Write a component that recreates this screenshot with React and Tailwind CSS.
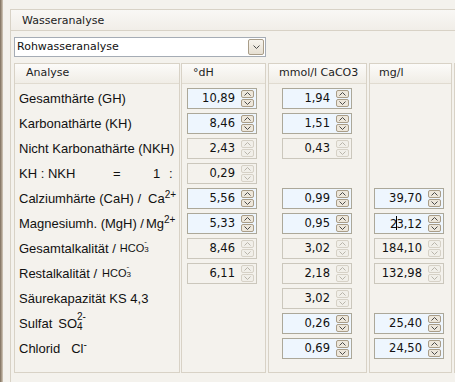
import React from 'react';

// stacked super/subscript so the charge sits above the index
const Stack = ({ top, bottom, size, shift }) => (
  <span className={`inline-flex flex-col leading-[0.95] relative ${size} ${shift}`}>
    <span>{top}</span>
    <span>{bottom}</span>
  </span>
);

const rows = [
  { label: <>Gesamthärte (GH)</>, dh: ['10,89', true], mmol: ['1,94', true], mg: null },
  { label: <>Karbonathärte (KH)</>, dh: ['8,46', true], mmol: ['1,51', true], mg: null },
  { label: <>Nicht Karbonathärte (NKH)</>, dh: ['2,43', false], mmol: ['0,43', false], mg: null },
  {
    label: (
      <>
        <span>KH : NKH</span>
        <span className="absolute left-[94px]">=</span>
        <span className="absolute left-[134px]">1</span>
        <span className="absolute left-[150px]">:</span>
      </>
    ),
    dh: ['0,29', false],
    mmol: null,
    mg: null,
  },
  {
    label: (
      <>
        <span>Calziumhärte (CaH) /</span>
        <span className="absolute left-[129px]">
          Ca<sup className="text-[10px]">2+</sup>
        </span>
      </>
    ),
    dh: ['5,56', true],
    mmol: ['0,99', true],
    mg: ['39,70', true],
  },
  {
    label: (
      <>
        <span>Magnesiumh. (MgH) /</span>
        <span className="absolute left-[127px]">
          Mg<sup className="text-[10px]">2+</sup>
        </span>
      </>
    ),
    dh: ['5,33', true],
    mmol: ['0,95', true],
    mg: ['23,12', true, 1],
  },
  {
    label: (
      <>
        <span>Gesamtalkalität /</span>
        <span className="ml-[4px] text-[11px]">HCO</span>
        <Stack top="-" bottom="3" size="text-[8px]" shift="-top-[3px]" />
      </>
    ),
    dh: ['8,46', false],
    mmol: ['3,02', false],
    mg: ['184,10', false],
  },
  {
    label: (
      <>
        <span>Restalkalität /</span>
        <span className="ml-[5px] text-[11px]">HCO</span>
        <Stack top="-" bottom="3" size="text-[8px]" shift="-top-[3px]" />
      </>
    ),
    dh: ['6,11', false],
    mmol: ['2,18', false],
    mg: ['132,98', false],
  },
  { label: <>Säurekapazität KS 4,3</>, dh: null, mmol: ['3,02', false], mg: null },
  {
    label: (
      <>
        <span>Sulfat</span>
        <span className="ml-[6px]">SO</span>
        <Stack top="2-" bottom="4" size="text-[10px]" shift="-top-[2px]" />
      </>
    ),
    dh: null,
    mmol: ['0,26', true],
    mg: ['25,40', true],
  },
  {
    label: (
      <>
        <span>Chlorid</span>
        <span className="ml-[11px]">
          Cl<sup className="text-[10px]">-</sup>
        </span>
      </>
    ),
    dh: null,
    mmol: ['0,69', true],
    mg: ['24,50', true],
  },
];

const Arrow = ({ up, on }) => (
  <svg width="7" height="4" viewBox="0 0 7 4" className="block">
    <path
      d={up ? 'M0.5 3.5 L3.5 0.5 L6.5 3.5' : 'M0.5 0.5 L3.5 3.5 L6.5 0.5'}
      fill="none"
      stroke={on ? '#4a4a4a' : '#b8b4aa'}
      strokeWidth="1"
    />
  </svg>
);

const Spin = ({ value }) => {
  if (!value) return <div className="h-[21px]" />;
  const [text, on, caret] = value;
  return (
    <div
      className={`h-[21px] w-[70px] flex items-center border ${
        on ? 'bg-[#eef6fe] border-[#aca899]' : 'bg-[#f4f2ed] border-[#cbc7bc]'
      }`}
    >
      <div className="flex-1 text-right pr-[6px] text-[11.5px] text-[#111] font-['DejaVu_Sans',sans-serif] leading-none">
        {caret ? (
          <>
            2<span className="inline-block w-px h-[14px] bg-black align-middle -mx-[1px] relative -top-[1px]" />
            3,12
          </>
        ) : (
          text
        )}
      </div>
      <div className="flex flex-col gap-px mr-[2px]">
        {[true, false].map((up) => (
          <div
            key={up ? 'u' : 'd'}
            className={`w-[13px] h-[8px] flex items-center justify-center border rounded-[2px] ${
              on ? 'bg-[#ede7db] border-[#a99d88]' : 'bg-[#f1efe9] border-[#d6d1c6]'
            }`}
          >
            <Arrow up={up} on={on} />
          </div>
        ))}
      </div>
    </div>
  );
};

const Column = ({ title, width, pad, titlePad, children }) => (
  <div className={`${width} h-[310px] border border-[#d8d2c6] bg-[#f4f2ed] flex flex-col shrink-0`}>
    <div
      className={`h-[20px] border-b border-[#e0dbd0] bg-gradient-to-b from-[#fcfbf9] to-[#f0ede6] flex items-center ${titlePad} text-[11px] text-[#222] font-['DejaVu_Sans',sans-serif]`}
    >
      {title}
    </div>
    <div className={`flex flex-col gap-[4px] pt-[4px] ${pad}`}>{children}</div>
  </div>
);

export default function App() {
  return (
    <div className="w-[455px] h-[382px] bg-[#f4f2ed] flex overflow-hidden font-['Liberation_Sans',Arial,sans-serif]">
      <div className="w-[3px] shrink-0 bg-gradient-to-r from-[#7c6d5c] via-[#a89a88] to-[#d5ccbf]" />
      <div className="flex-1 pl-[7px] pt-[9px] min-w-0">
        <div className="border-l border-t border-[#d8d2c6] h-full">
          <div className="h-[21px] pt-[2px] border-b border-[#d8d2c6] bg-gradient-to-b from-[#f9f8f5] to-[#f1eee8] flex items-center pl-[11px] text-[11px] text-[#222] font-['DejaVu_Sans',sans-serif]">
            Wasseranalyse
          </div>
          <div className="pl-[3px] pt-[6px]">
            <div className="w-[252px] h-[20px] border border-[#a5acb5] bg-white flex items-center justify-between pl-[2px] pr-[1px]">
              <span className="text-[11px] text-[#111] font-['DejaVu_Sans',sans-serif]">Rohwasseranalyse</span>
              <div className="w-[16px] h-[16px] border border-[#a99d88] rounded-[2px] bg-gradient-to-b from-[#f7f4ee] to-[#e6dfd2] flex items-center justify-center">
                <Arrow up={false} on />
              </div>
            </div>
            <div className="flex mt-[6px]">
              <Column title="Analyse" width="w-[166px]" pad="pl-[4px]" titlePad="pl-[11px]">
                {rows.map((r, i) => (
                  <div key={i} className="h-[21px] relative flex items-center text-[13px] text-[#111] whitespace-nowrap leading-none">
                    {r.label}
                  </div>
                ))}
              </Column>
              <div className="w-[1px] shrink-0" />
              <Column title="°dH" width="w-[85px]" pad="pl-[5px]" titlePad="pl-[11px]">
                {rows.map((r, i) => (
                  <Spin key={i} value={r.dh} />
                ))}
              </Column>
              <div className="w-[2px] shrink-0" />
              <Column title="mmol/l CaCO3" width="w-[99px]" pad="pl-[13px]" titlePad="pl-[10px]">
                {rows.map((r, i) => (
                  <Spin key={i} value={r.mmol} />
                ))}
              </Column>
              <div className="w-[2px] shrink-0" />
              <Column title="mg/l" width="w-[83px]" pad="pl-[4px]" titlePad="pl-[9px]">
                {rows.map((r, i) => (
                  <Spin key={i} value={r.mg} />
                ))}
              </Column>
              <div className="w-[2px] shrink-0" />
              <div className="w-[10px] h-[310px] border border-[#d8d2c6] bg-gradient-to-b from-[#fcfbf9] to-[#f4f2ed] shrink-0" />
            </div>
          </div>
        </div>
      </div>
    </div>
  );
}
